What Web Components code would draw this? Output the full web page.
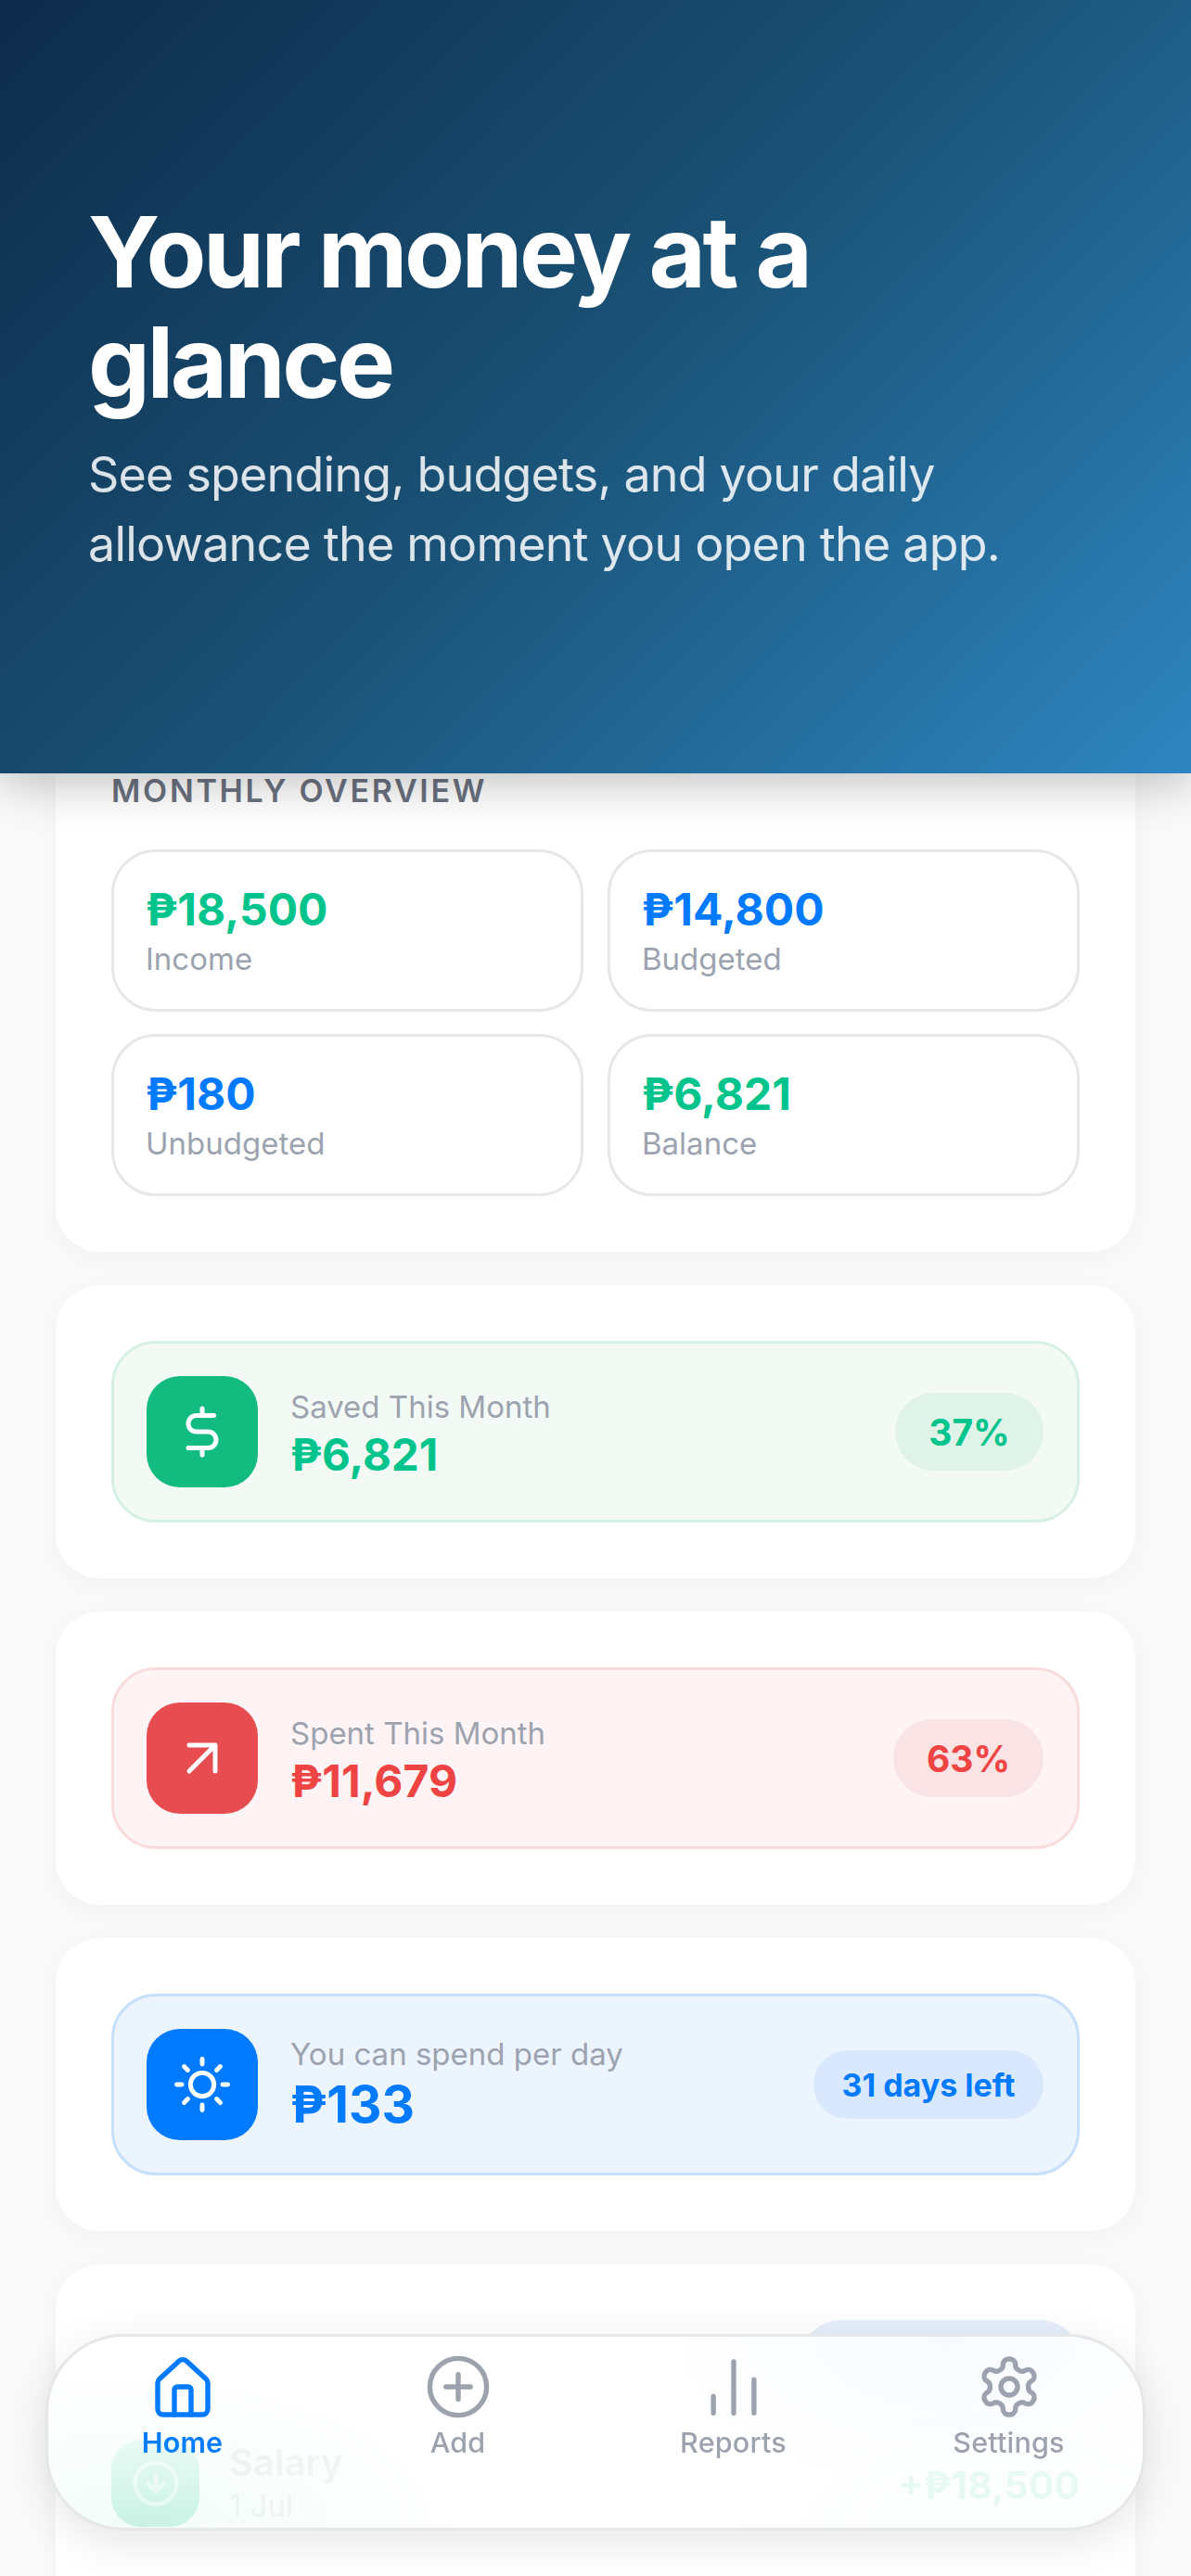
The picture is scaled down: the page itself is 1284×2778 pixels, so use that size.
<!DOCTYPE html>
<html lang="en"><head><meta charset="utf-8"><title>Money at a glance</title>
<style>
html,body{margin:0;padding:0;height:2778px;overflow:hidden;background:#fafafb;font-family:Inter,"Noto Sans",sans-serif;}
</style></head><body>
<app-page>
  <hero-banner>
    <span slot="title">Your money at a glance</span>
    <span slot="sub">See spending, budgets, and your daily allowance the moment you open the app.</span>
  </hero-banner>
  <overview-card>
    <stat-tile tone="green"><span slot="value">₱18,500</span>Income</stat-tile>
    <stat-tile tone="blue"><span slot="value">₱14,800</span>Budgeted</stat-tile>
    <stat-tile tone="blue"><span slot="value">₱180</span>Unbudgeted</stat-tile>
    <stat-tile tone="green"><span slot="value">₱6,821</span>Balance</stat-tile>
  </overview-card>
  <metric-card tone="green" icon="dollar"><span slot="label">Saved This Month</span><span slot="value">₱6,821</span><span slot="pill">37%</span></metric-card>
  <metric-card tone="red" icon="arrow"><span slot="label">Spent This Month</span><span slot="value">₱11,679</span><span slot="pill">63%</span></metric-card>
  <metric-card tone="blue" icon="sun"><span slot="label">You can spend per day</span><span slot="value">₱133</span><span slot="pill">31 days left</span></metric-card>
  <recent-card>
    <tx-row><span slot="name">Salary</span><span slot="date">1 Jul</span><span slot="amount">+₱18,500</span></tx-row>
  </recent-card>
</app-page>
<bottom-nav>
  <nav-item icon="home" active>Home</nav-item>
  <nav-item icon="add">Add</nav-item>
  <nav-item icon="reports">Reports</nav-item>
  <nav-item icon="settings">Settings</nav-item>
</bottom-nav>
<script>
const ICONS={
 dollar:'<path d="M12 2v3M12 19v3M17 5H9.5a3.5 3.5 0 0 0 0 7h5a3.5 3.5 0 0 1 0 7H6"/>',
 arrow:'<path d="M6.4 6.4h11.2v11.2M6.4 17.6 17.6 6.4"/>',
 sun:'<circle cx="12" cy="12" r="4.6"/><path d="M12 2v2M12 20v2M4.93 4.93l1.41 1.41M17.66 17.66l1.41 1.41M2 12h2M20 12h2M6.34 17.66l-1.41 1.41M19.07 4.93l-1.41 1.41"/>',
 down:'<circle cx="12" cy="12" r="10"/><path d="M12 8v8M8 12l4 4 4-4"/>',
 home:'<path d="M3 10.6a2 2 0 0 1 .65-1.47l7-6.4a2 2 0 0 1 2.7 0l7 6.4A2 2 0 0 1 21 10.6V20a2 2 0 0 1-2 2H5a2 2 0 0 1-2-2z"/><path d="M9 22v-9a1 1 0 0 1 1-1h4a1 1 0 0 1 1 1v9"/>',
 add:'<circle cx="12" cy="12" r="10.2"/><path d="M12 7.6v8.8M7.6 12h8.8"/>',
 reports:'<path d="M4.7 21.4v-6M12 21.4V3M19.3 21.4V9.4"/>',
 settings:'<path d="M12.22 2h-.44a2 2 0 0 0-2 2v.18a2 2 0 0 1-1 1.73l-.43.25a2 2 0 0 1-2 0l-.15-.08a2 2 0 0 0-2.73.73l-.22.38a2 2 0 0 0 .73 2.73l.15.1a2 2 0 0 1 1 1.72v.51a2 2 0 0 1-1 1.74l-.15.09a2 2 0 0 0-.73 2.73l.22.38a2 2 0 0 0 2.73.73l.15-.08a2 2 0 0 1 2 0l.43.25a2 2 0 0 1 1 1.73V20a2 2 0 0 0 2 2h.44a2 2 0 0 0 2-2v-.18a2 2 0 0 1 1-1.73l.43-.25a2 2 0 0 1 2 0l.15.08a2 2 0 0 0 2.73-.73l.22-.39a2 2 0 0 0-.73-2.73l-.15-.08a2 2 0 0 1-1-1.74v-.5a2 2 0 0 1 1-1.74l.15-.09a2 2 0 0 0 .73-2.73l-.22-.38a2 2 0 0 0-2.73-.73l-.15.08a2 2 0 0 1-2 0l-.43-.25a2 2 0 0 1-1-1.73V4a2 2 0 0 0-2-2z"/><circle cx="12" cy="12" r="3"/>'
};
const svg=(n,size,sw)=>`<svg width="${size}" height="${size}" viewBox="0 0 24 24" fill="none" stroke="currentColor" stroke-width="${sw}" stroke-linecap="round" stroke-linejoin="round">${ICONS[n]}</svg>`;
function el(name,html){
  customElements.define(name,class extends HTMLElement{
    constructor(){super();this.attachShadow({mode:'open'});}
    connectedCallback(){this.shadowRoot.innerHTML=typeof html==='function'?html(this):html;}
  });
}
el('app-page',`<style>:host{display:flex;flex-direction:column;gap:36px;padding-bottom:60px}</style><slot></slot>`);
el('hero-banner',`<style>
:host{display:flex;flex-direction:column;justify-content:center;box-sizing:border-box;height:834px;padding:2px 96px 0;margin-bottom:-36px;position:relative;z-index:5;color:#fff;
background:linear-gradient(135deg,#0d2b4a 0%,#1a5276 50%,#2e86c1 100%);box-shadow:0 12px 48px rgba(0,0,0,.24)}
h1{margin:0 0 0 -1px;font:700 106px/119px Inter,sans-serif;letter-spacing:-3.5px;max-width:1000px}
p{margin:24px 0 0 -1px;font:400 52px/75px Inter,sans-serif;letter-spacing:-.8px;color:rgba(255,255,255,.85)}
</style><h1><slot name="title"></slot></h1><p><slot name="sub"></slot></p>`);
el('overview-card',`<style>
:host{display:block;background:#fff;border-radius:0 0 48px 48px;margin:0 60px;padding:0 60px 60px;box-shadow:0 6px 30px rgba(0,0,0,.04)}
h2{margin:0;font:600 34px/38px Inter,sans-serif;letter-spacing:2.7px;color:#6b7280;height:82px;text-transform:uppercase}
div{display:grid;grid-template-columns:1fr 1fr;gap:24px 26px}
</style><h2>Monthly Overview</h2><div><slot></slot></div>`);
el('stat-tile',t=>`<style>
:host{display:flex;flex-direction:column;justify-content:center;box-sizing:border-box;height:175px;border:3px solid #e5e7eb;border-radius:48px;padding:0 34px;font:400 33px/45px Inter,sans-serif;color:#9ca3af}
.v{font:700 48px/62px Inter,sans-serif;color:${t.getAttribute('tone')==='green'?'#00c48c':'#007aff'}}
</style><div class="v"><slot name="value"></slot></div><div><slot></slot></div>`);
const TONES={
 green:{bg:'#f3faf6',bd:'#d6f0e3',ic:'#12bb80',v:'#00c48c',pill:'#dff3e8',pf:'39px',vf:'47.5px',ph:'84px',pw:'160px'},
 red:{bg:'#fef4f5',bd:'#fadcdc',ic:'#e74c50',v:'#ef4444',pill:'#f9e3e5',pf:'39px',vf:'48px',ph:'84px',pw:'162px'},
 blue:{bg:'#ecf4fe',bd:'#c5dffc',ic:'#007aff',v:'#007aff',pill:'#d9e8fd',pf:'34px',vf:'55px',ph:'74px',pw:'248px'}
};
el('metric-card',t=>{const c=TONES[t.getAttribute('tone')],n=t.getAttribute('icon');return `<style>
:host{display:block;background:#fff;border-radius:48px;margin:0 60px;padding:60px;box-shadow:0 6px 30px rgba(0,0,0,.04)}
.p{display:flex;align-items:center;gap:35px;box-sizing:border-box;height:196px;padding:0 36px 0 35px;border:3px solid ${c.bd};background:${c.bg};border-radius:48px}
.i{width:120px;height:120px;border-radius:36px;background:${c.ic};color:#fff;display:flex;align-items:center;justify-content:center;flex:none}
.t{flex:1;min-width:0;${n==='sun'?'':'padding-top:5px'}}
.l{font:400 33px/44px Inter,sans-serif;color:#9ca3af;${n==='sun'?'margin-top:-3px':''}}
.v{font:700 ${c.vf}/${n==='sun'?'64px':'60px'} Inter,sans-serif;color:${c.v}}
.b{flex:none;width:${c.pw};height:${c.ph};border-radius:42px;background:${c.pill};color:${c.v};font:700 ${c.pf}/${parseInt(c.ph)+2}px Inter,sans-serif;text-align:center}
svg{display:block}
</style><div class="p"><div class="i">${svg(n,n==='sun'?66:60,n==='sun'?1.8:2)}</div><div class="t"><div class="l"><slot name="label"></slot></div><div class="v"><slot name="value"></slot></div></div><div class="b"><slot name="pill"></slot></div></div>`});
el('recent-card',`<style>
:host{display:block;background:#fff;border-radius:48px;margin:0 60px;padding:60px 60px 0;height:400px;box-sizing:border-box;box-shadow:0 6px 30px rgba(0,0,0,.04)}
.h{display:flex;justify-content:flex-end;height:129px;}
.pill{width:300px;height:84px;border-radius:42px;background:#e6eefb}
</style><div class="h"><div class="pill"></div></div><slot></slot>`);
el('tx-row',`<style>
:host{display:flex;align-items:center;gap:32px;position:relative;z-index:20}
.i{width:95px;height:94px;border-radius:32px;background:linear-gradient(rgba(0,196,140,.06),rgba(0,196,140,.17));color:rgba(255,255,255,.45);display:flex;align-items:center;justify-content:center;flex:none}
.t{flex:1}
.n{font:600 40px/48px Inter,sans-serif;color:rgba(17,24,39,.045)}
.d{font:400 33px/44px Inter,sans-serif;color:rgba(17,24,39,.045)}
.a{font:700 41px/54px Inter,sans-serif;color:rgba(0,196,140,.08);padding-top:4px}
svg{display:block}
</style><div class="i">${svg('down',54,2)}</div><div class="t"><div class="n"><slot name="name"></slot></div><div class="d"><slot name="date"></slot></div></div><div class="a"><slot name="amount"></slot></div>`);
el('bottom-nav',`<style>
:host{position:fixed;left:49px;top:2517px;width:1186px;height:212px;box-sizing:border-box;z-index:10;display:grid;grid-template-columns:repeat(4,297px);justify-content:center;align-items:start;padding-top:18px;border:3px solid #e6e7e8;border-radius:84px;
background:radial-gradient(360px 180px at 8% 100%,rgba(0,196,140,.05),transparent),radial-gradient(320px 140px at 88% 100%,rgba(0,196,140,.02),transparent),radial-gradient(320px 170px at 82% 0,rgba(0,122,255,.03),transparent),#fff;
box-shadow:0 12px 48px rgba(0,0,0,.1)}
</style><slot></slot>`);
el('nav-item',t=>{const a=t.hasAttribute('active');return `<style>
:host{display:flex;flex-direction:column;align-items:center;color:${a?'#007aff':'#9ca3af'};font:${a?600:500} 30.5px/36px Inter,sans-serif;letter-spacing:.2px}
svg{display:block;margin-bottom:6px}
</style>${svg(t.getAttribute('icon'),72,1.8)}<slot></slot>`});
</script>
</body></html>
